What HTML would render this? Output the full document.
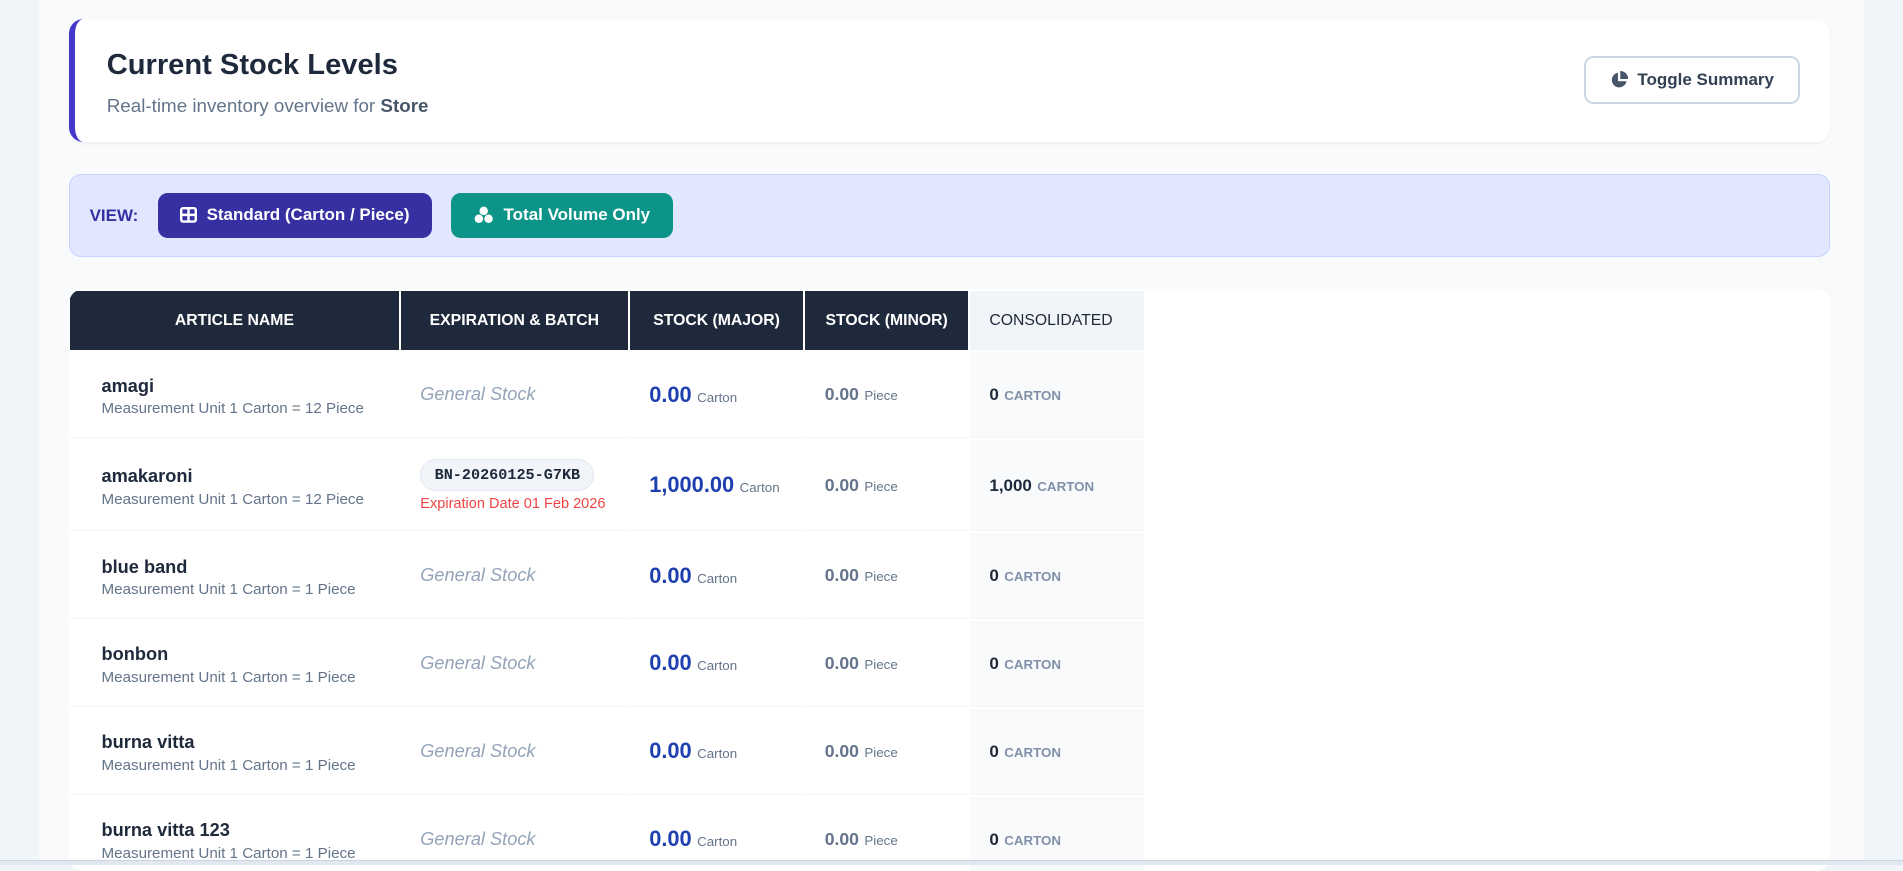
<!DOCTYPE html>
<html><head><meta charset="utf-8"><style>
html,body{margin:0;padding:0;}
body{width:1903px;height:864px;overflow:hidden;background:#f1f5f9;font-family:"Liberation Sans",sans-serif;}
#z{zoom:1.21365;width:1568px;height:712px;position:relative;}
.inner{position:absolute;left:32px;top:0;width:1504px;height:712px;background:#f8fafc;}
.hdr{position:absolute;left:57px;top:16px;width:1451px;height:101px;background:#fff;border-radius:12px;border-left:5px solid #4338ca;box-sizing:border-box;box-shadow:0 1px 3px rgba(0,0,0,.05);}
.hdr h1{position:absolute;left:26px;top:24px;margin:0;font-size:24px;font-weight:bold;color:#1e293b;}
.hdr p{position:absolute;left:26px;top:62px;margin:0;font-size:15.5px;color:#64748b;}
.hdr p b{color:#475569}
.tog{position:absolute;left:1243px;top:30px;width:178px;height:40px;border:2px solid #cbd5e1;border-radius:8px;box-sizing:border-box;font-size:14px;font-weight:bold;color:#334155;display:flex;align-items:center;justify-content:center;gap:8px;}
.view{position:absolute;left:57px;top:143px;width:1451px;height:69px;background:#e0e7ff;border:1px solid #c7d2fe;border-radius:10px;box-sizing:border-box;}
.view .l{position:absolute;left:16px;top:26px;font-size:14px;font-weight:bold;color:#3730a3;}
.btn{position:absolute;top:15px;height:37px;border-radius:8px;color:#fff;font-size:14px;font-weight:bold;display:flex;align-items:center;justify-content:center;gap:8px;}
.card{position:absolute;left:57px;top:238px;width:1451px;height:480px;background:#fff;border-radius:12px;overflow:hidden;}
table{border-collapse:separate;border-spacing:2px;position:absolute;left:-1px;top:0;}
th{background:#1e293b;color:#fff;font-size:13px;font-weight:bold;height:49px;padding:0;text-align:center;}
th.c{background:#f1f5f9;color:#1e293b;text-align:left;padding-left:16px;font-weight:normal;}
td{height:70px;padding:0;border-bottom:1px solid #f1f5f9;vertical-align:middle;}
td.n{padding-left:26px;}
.nm{font-size:15px;font-weight:bold;color:#1e293b;margin-top:3px;}
.mu{font-size:12.5px;color:#64748b;margin-top:3px;}
.gs{font-style:italic;color:#94a3b8;font-size:15px;padding-left:16px;}
td.e{padding-left:16px;}
.bt{display:inline-block;background:#f1f5f9;border:1px solid #e2e8f0;border-radius:14px;padding:5px 11px;font-family:"Liberation Mono",monospace;font-weight:bold;font-size:12.5px;color:#1e293b;}
.ex{color:#ef4444;font-size:12px;margin-top:4px;}
.mj{padding-left:16px;}
.mj b{color:#1e40af;font-size:18px;}
.mj span,.mi span{font-size:11px;color:#64748b;}
.mi{padding-left:16px;}
.mi b{color:#64748b;font-size:14.5px;}
td.c{background:#f8fafc;padding-left:16px;}
td.c b{color:#1e293b;font-size:14px;}
td.c span{color:#8190a8;font-size:11px;font-weight:bold;}
.bot{position:absolute;left:0;top:709px;width:1568px;height:3px;background:#e2e8f0;border-top:1px solid #cbd5e1;}
</style></head><body><div id="z">
<div class="inner"></div>
<div class="hdr"><h1>Current Stock Levels</h1><p>Real-time inventory overview for <b>Store</b></p>
<div class="tog"><svg width="15" height="15" viewBox="0 0 16 16"><path d="M7 1.5A6.5 6.5 0 1 0 14.5 9H7z" fill="#475569"/><path d="M9 0v7h7A7 7 0 0 0 9 0z" fill="#475569"/></svg>Toggle Summary</div></div>
<div class="view"><div class="l">VIEW:</div>
<div class="btn" style="left:72px;width:226px;background:#3730a3"><svg width="14" height="13" viewBox="0 0 14 13"><rect x="1" y="1" width="12" height="11" rx="1.5" fill="none" stroke="#fff" stroke-width="2"/><path d="M7 1v11M1 6.5h12" stroke="#fff" stroke-width="2"/></svg>Standard (Carton / Piece)</div>
<div class="btn" style="left:314px;width:183px;background:#0d9488"><svg width="16" height="15" viewBox="0 0 16 15"><circle cx="8" cy="4" r="3.5" fill="#fff"/><circle cx="4" cy="10.5" r="3.5" fill="#fff"/><circle cx="12" cy="10.5" r="3.5" fill="#fff"/></svg>Total Volume Only</div></div>
<div class="card"><table>
<tr><th style="width:271px">ARTICLE NAME</th><th style="width:187px">EXPIRATION &amp; BATCH</th><th style="width:143px">STOCK (MAJOR)</th><th style="width:134px">STOCK (MINOR)</th><th class="c" style="width:127px">CONSOLIDATED</th></tr>
<tr><td class="n"><div class="nm">amagi</div><div class="mu">Measurement Unit 1 Carton = 12 Piece</div></td><td class="gs">General Stock</td><td class="mj"><b>0.00</b> <span>Carton</span></td><td class="mi"><b>0.00</b> <span>Piece</span></td><td class="c"><b>0</b> <span>CARTON</span></td></tr>
<tr><td class="n" style="height:74px"><div class="nm">amakaroni</div><div class="mu">Measurement Unit 1 Carton = 12 Piece</div></td><td class="e"><div class="bt">BN-20260125-G7KB</div><div class="ex">Expiration Date 01 Feb 2026</div></td><td class="mj"><b>1,000.00</b> <span>Carton</span></td><td class="mi"><b>0.00</b> <span>Piece</span></td><td class="c"><b>1,000</b> <span>CARTON</span></td></tr>
<tr><td class="n"><div class="nm">blue band</div><div class="mu">Measurement Unit 1 Carton = 1 Piece</div></td><td class="gs">General Stock</td><td class="mj"><b>0.00</b> <span>Carton</span></td><td class="mi"><b>0.00</b> <span>Piece</span></td><td class="c"><b>0</b> <span>CARTON</span></td></tr>
<tr><td class="n"><div class="nm">bonbon</div><div class="mu">Measurement Unit 1 Carton = 1 Piece</div></td><td class="gs">General Stock</td><td class="mj"><b>0.00</b> <span>Carton</span></td><td class="mi"><b>0.00</b> <span>Piece</span></td><td class="c"><b>0</b> <span>CARTON</span></td></tr>
<tr><td class="n"><div class="nm">burna vitta</div><div class="mu">Measurement Unit 1 Carton = 1 Piece</div></td><td class="gs">General Stock</td><td class="mj"><b>0.00</b> <span>Carton</span></td><td class="mi"><b>0.00</b> <span>Piece</span></td><td class="c"><b>0</b> <span>CARTON</span></td></tr>
<tr><td class="n"><div class="nm">burna vitta 123</div><div class="mu">Measurement Unit 1 Carton = 1 Piece</div></td><td class="gs">General Stock</td><td class="mj"><b>0.00</b> <span>Carton</span></td><td class="mi"><b>0.00</b> <span>Piece</span></td><td class="c"><b>0</b> <span>CARTON</span></td></tr>
</table></div>
<div class="bot"></div>
</div></body></html>
